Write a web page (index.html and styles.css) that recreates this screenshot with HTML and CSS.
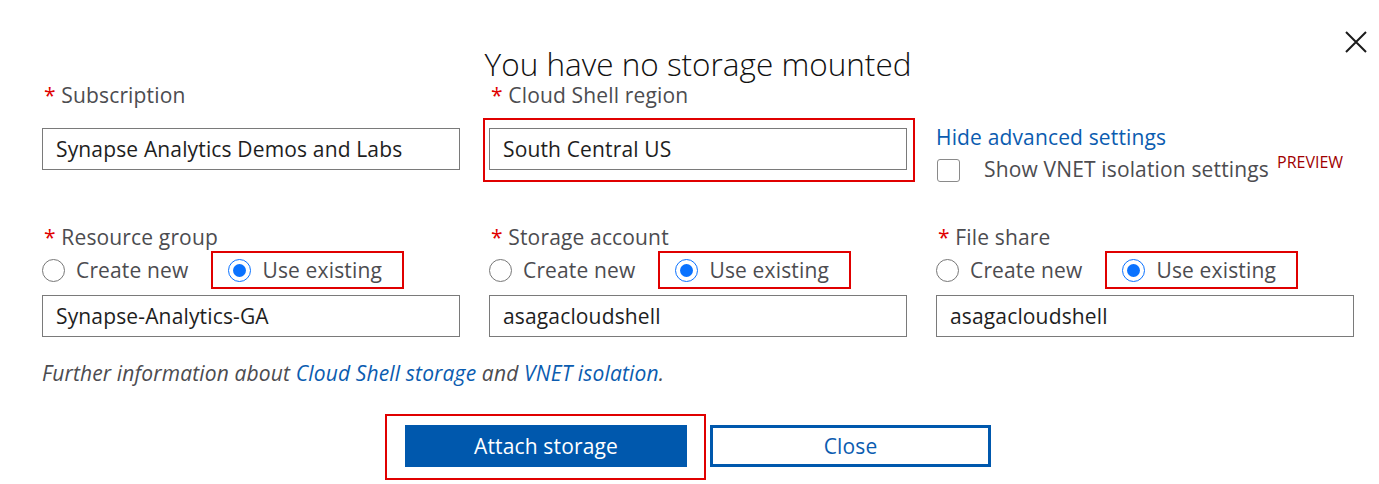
FILE: index.html
```html
<!DOCTYPE html>
<html lang="en">
<head>
<meta charset="utf-8">
<title>Cloud Shell storage</title>
<link rel="stylesheet" href="styles.css">
</head>
<body>
<div class="dialog">
  <button class="close-x" aria-label="Close">
    <svg width="22" height="22" viewBox="0 0 22 22"><path d="M1 1 L21 21 M21 1 L1 21" stroke="#1b1b1b" stroke-width="2" fill="none"/></svg>
  </button>
  <h1 class="title">You have no storage mounted</h1>
  <div class="grid">
    <div class="field">
      <div class="label"><span class="req">*</span> Subscription</div>
      <div class="input">Synapse Analytics Demos and Labs</div>
    </div>
    <div class="field">
      <div class="label"><span class="req">*</span> Cloud Shell region</div>
      <div class="mark-over"><div class="input">South Central US</div></div>
    </div>
    <div class="field advanced">
      <a class="link" href="#">Hide advanced settings</a>
      <div class="check-row">
        <span class="checkbox"></span>
        <span class="check-text">Show VNET isolation settings</span>
        <span class="preview">PREVIEW</span>
      </div>
    </div>

    <div class="field row2">
      <div class="label"><span class="req">*</span> Resource group</div>
      <div class="radios">
        <span class="radio-opt"><span class="radio"></span>Create new</span>
        <span class="radio-opt marked"><span class="radio on"></span>Use existing</span>
      </div>
      <div class="input">Synapse-Analytics-GA</div>
    </div>
    <div class="field row2">
      <div class="label"><span class="req">*</span> Storage account</div>
      <div class="radios">
        <span class="radio-opt"><span class="radio"></span>Create new</span>
        <span class="radio-opt marked"><span class="radio on"></span>Use existing</span>
      </div>
      <div class="input">asagacloudshell</div>
    </div>
    <div class="field row2">
      <div class="label"><span class="req">*</span> File share</div>
      <div class="radios">
        <span class="radio-opt"><span class="radio"></span>Create new</span>
        <span class="radio-opt marked"><span class="radio on"></span>Use existing</span>
      </div>
      <div class="input">asagacloudshell</div>
    </div>
  </div>
  <p class="note">Further information about <a href="#">Cloud Shell storage</a> and <a href="#">VNET isolation</a>.</p>
  <div class="actions">
    <span class="mark-btn"><button class="btn primary">Attach storage</button></span>
    <button class="btn secondary">Close</button>
  </div>
</div>
</body>
</html>
```

FILE: styles.css
```css
* { box-sizing: border-box; }
html, body { margin: 0; padding: 0; background: #fff; }
body {
  font-family: "Open Sans", "Noto Sans", sans-serif;
  font-size: 21px;
  letter-spacing: 0.15px;
  color: #1e1e1e;
}
.dialog {
  position: relative;
  width: 1379px;
  height: 484px;
  padding: 46px 25px 0 42px;
}
.close-x {
  position: absolute;
  left: 1345px;
  top: 31px;
  width: 22px;
  height: 22px;
  padding: 0;
  border: 0;
  background: none;
}
.close-x svg { display: block; }
.title {
  margin: 0;
  font-size: 31.5px;
  letter-spacing: 0;
  line-height: 36px;
  font-weight: 300;
  color: #111;
  text-align: center;
}
.grid {
  display: grid;
  grid-template-columns: repeat(3, 1fr);
  column-gap: 29px;
  row-gap: 41px;
}
.field { display: flex; flex-direction: column; }
.label {
  line-height: 26px;
  color: #4c4c50;
  white-space: nowrap;
}
.req { color: #e00000; margin-left: 2px; }
.input {
  height: 42px;
  border: 1px solid #7a7a7a;
  padding: 0 13px;
  line-height: 40px;
  color: #1e1e1e;
  white-space: nowrap;
}
.field > .input, .field > .mark-over { margin-top: 20px; }
.mark-over { position: relative; }
.mark-over::after {
  content: "";
  position: absolute;
  inset: -10px -8px -12px -6px;
  border: 2px solid #e00000;
  pointer-events: none;
}
.advanced { padding-top: 42px; }
.link {
  color: #0b5cb0;
  text-decoration: none;
  line-height: 26px;
  align-self: flex-start;
}
.check-row {
  display: flex;
  align-items: center;
  margin-top: 5px;
  height: 28px;
  color: #4c4c50;
}
.checkbox {
  width: 23px;
  height: 23px;
  border: 1px solid #8a8a8a;
  border-radius: 3px;
  margin: 3px 24px 0 1px;
  flex: none;
}
.preview {
  align-self: flex-start;
  margin-left: 8px;
  margin-top: -4px;
  font-size: 16px;
  letter-spacing: 0;
  color: #a00000;
}
.row2 .radios {
  display: flex;
  align-items: center;
  height: 38px;
  margin-top: 1px;
}
.row2 > .input { margin-top: 6px; }
.radio-opt {
  display: flex;
  align-items: center;
  height: 38px;
  color: #4c4c50;
  white-space: nowrap;
}
.radio {
  width: 23px;
  height: 23px;
  border: 1px solid #777;
  border-radius: 50%;
  margin-right: 11px;
  flex: none;
  position: relative;
}
.radio.on { border-color: #0a72ff; }
.radio.on::after {
  content: "";
  position: absolute;
  inset: 4px;
  border-radius: 50%;
  background: #0a72ff;
}
.radio-opt.marked {
  border: 2px solid #e00000;
  margin-left: 23px;
  padding: 0 20px 0 15px;
}
.note {
  margin: 23px 0 0;
  line-height: 26px;
  font-style: italic;
  color: #4c4c50;
}
.note a { color: #0b5cb0; text-decoration: none; }
.actions {
  display: flex;
  justify-content: center;
  gap: 23px;
  margin-top: 39px;
}
.mark-btn { position: relative; display: flex; }
.mark-btn::after {
  content: "";
  position: absolute;
  inset: -11px -19px -13px -20px;
  border: 2px solid #e00000;
  pointer-events: none;
}
.btn {
  width: 282px;
  height: 42px;
  font-family: inherit;
  font-size: 21px;
  letter-spacing: 0.15px;
  padding: 0;
  cursor: pointer;
}
.btn.primary {
  background: #0058ad;
  color: #fff;
  border: 0;
}
.btn.secondary {
  background: #fff;
  color: #0b5cb0;
  border: 3px solid #0058ad;
  width: 281px;
}
```
